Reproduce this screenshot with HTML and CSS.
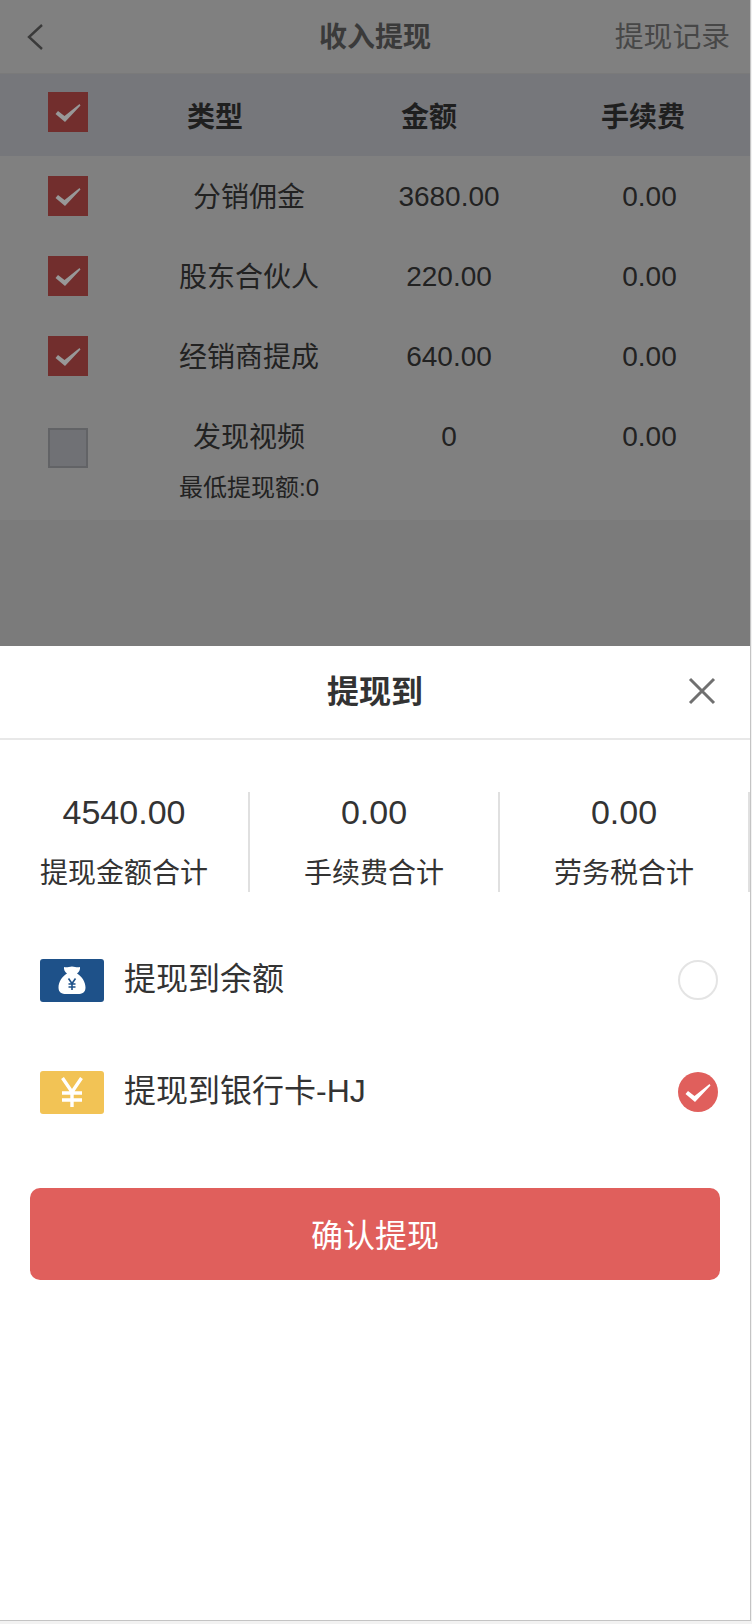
FILE: index.html
```html
<!DOCTYPE html>
<html lang="en">
<head>
    <meta charset="UTF-8">
    <meta name="viewport" content="width=device-width, initial-scale=1.0">
    <title>收入提现</title>
    <link rel="stylesheet" href="styles.css">
</head>
<body>
    <div class="page">
        <div class="backdrop">
            <div class="nav">
                <svg class="nav-back" width="18" height="28" viewBox="0 0 18 28"><path d="M16 2 L3 14 L16 26" fill="none" stroke="#3a3a3a" stroke-width="2.4"/></svg>
                <div class="nav-title">收入提现</div>
                <div class="nav-link">提现记录</div>
            </div>

            <div class="table-head">
                <div class="head-check"><span class="check on"><svg width="26" height="20" viewBox="0 0 26 20"><path d="M0.5 12 L3 9 L9.5 14 L24.5 2 L25.5 3.5 L10 20 Z" fill="#989898"/></svg></span></div>
                <div>类型</div>
                <div>金额</div>
                <div>手续费</div>
            </div>

            <div class="rows">
                <div class="row">
                    <div class="row-check"><span class="check on"><svg width="26" height="20" viewBox="0 0 26 20"><path d="M0.5 12 L3 9 L9.5 14 L24.5 2 L25.5 3.5 L10 20 Z" fill="#989898"/></svg></span></div>
                    <div class="row-name">分销佣金</div>
                    <div>3680.00</div>
                    <div>0.00</div>
                </div>
                <div class="row">
                    <div class="row-check"><span class="check on"><svg width="26" height="20" viewBox="0 0 26 20"><path d="M0.5 12 L3 9 L9.5 14 L24.5 2 L25.5 3.5 L10 20 Z" fill="#989898"/></svg></span></div>
                    <div class="row-name">股东合伙人</div>
                    <div>220.00</div>
                    <div>0.00</div>
                </div>
                <div class="row">
                    <div class="row-check"><span class="check on"><svg width="26" height="20" viewBox="0 0 26 20"><path d="M0.5 12 L3 9 L9.5 14 L24.5 2 L25.5 3.5 L10 20 Z" fill="#989898"/></svg></span></div>
                    <div class="row-name">经销商提成</div>
                    <div>640.00</div>
                    <div>0.00</div>
                </div>
                <div class="row row-last">
                    <div class="row-check"><span class="check"></span></div>
                    <div class="row-name">发现视频<p class="row-note">最低提现额:0</p></div>
                    <div>0</div>
                    <div>0.00</div>
                </div>
            </div>
        </div>

        <div class="sheet">
            <div class="sheet-head">
                <div class="sheet-title">提现到</div>
                <svg class="sheet-close" width="28" height="28" viewBox="0 0 28 28"><path d="M2 2 L26 26 M26 2 L2 26" stroke="#707070" stroke-width="3"/></svg>
            </div>

            <div class="stats">
                <div class="stat">
                    <div class="stat-num">4540.00</div>
                    <div class="stat-label">提现金额合计</div>
                </div>
                <div class="stat">
                    <div class="stat-num">0.00</div>
                    <div class="stat-label">手续费合计</div>
                </div>
                <div class="stat">
                    <div class="stat-num">0.00</div>
                    <div class="stat-label">劳务税合计</div>
                </div>
            </div>

            <div class="option">
                <span class="option-icon blue">
                    <svg width="28" height="28" viewBox="0 0 28 28">
                        <path d="M6 1 C9 2 11 0.5 14 0.5 C17 0.5 19 2 22 1 C22.5 3.5 21 6 19 7.5 C24 10.5 27.5 16 27.5 21.5 C27.5 26.5 24 28 20 28 L8 28 C4 28 0.5 26.5 0.5 21.5 C0.5 16 4 10.5 9 7.5 C7 6 5.5 3.5 6 1 Z" fill="#fff"/>
                        <path d="M10.5 12.5 L14 17.5 L17.5 12.5 M14 17.5 L14 24 M10.5 18 L17.5 18 M10.5 21 L17.5 21" fill="none" stroke="#1e5189" stroke-width="1.6"/>
                    </svg>
                </span>
                <span class="option-text">提现到余额</span>
                <span class="radio"></span>
            </div>
            <div class="option">
                <span class="option-icon yellow">
                    <svg width="22" height="30" viewBox="0 0 22 30">
                        <path d="M1.5 1 L11 15 L20.5 1 M11 15 L11 30 M1 16 L21 16 M1 23 L21 23" fill="none" stroke="#fff" stroke-width="3.4"/>
                    </svg>
                </span>
                <span class="option-text">提现到银行卡-HJ</span>
                <span class="radio on"><svg width="26" height="20" viewBox="0 0 26 20"><path d="M0.5 12 L3 9 L9.5 14 L24.5 2 L25.5 3.5 L10 20 Z" fill="#fff"/></svg></span>
            </div>

            <button class="confirm">确认提现</button>
        </div>
    </div>
</body>
</html>
```

FILE: styles.css
```css
* {
    box-sizing: border-box;
}
body {
    margin: 0;
    background-color: #f2f2f2;
    font-family: "Liberation Sans", "Noto Sans CJK SC", sans-serif;
}
.page {
    width: 751px;
    height: 1621px;
    display: flex;
    flex-direction: column;
    border-right: 1px solid #c4c4c4;
    border-bottom: 1px solid #c4c4c4;
}

/* dimmed page behind the sheet */
.backdrop {
    height: 646px;
    background-color: #7b7b7b;
}
.nav {
    height: 74px;
    display: flex;
    align-items: center;
    justify-content: center;
    position: relative;
    padding-bottom: 4px;
    background-color: #808080;
    border-bottom: 1px solid #7a7a7a;
}
.nav-back {
    position: absolute;
    left: 26px;
    top: 23px;
}
.nav-title {
    font-size: 28px;
    font-weight: bold;
    color: #3a3a3a;
}
.nav-link {
    position: absolute;
    right: 20px;
    top: 14px;
    font-size: 28.8px;
    color: #474747;
}
.table-head {
    height: 82px;
    display: grid;
    grid-template-columns: 108px repeat(3, 214px);
    align-items: center;
    text-align: center;
    background-color: #76777b;
    font-size: 28px;
    font-weight: bold;
    color: #1f1f1f;
}
.head-check {
    padding: 0 0 6px 48px;
    display: flex;
}
.rows {
    height: 364px;
    background-color: #808080;
}
.row {
    height: 80px;
    display: grid;
    grid-template-columns: 149px 200px 200px 201px;
    align-items: start;
    text-align: center;
    font-size: 28px;
    line-height: 82px;
    color: #222;
}
.row-name {
    padding-top: 1px;
}
.row-check {
    padding: 20px 0 0 48px;
    display: flex;
}
.row-last {
    height: 124px;
}
.row-last .row-check {
    padding-top: 32px;
}
.row-note {
    margin: -7px 0 0;
    font-size: 24px;
    line-height: 32px;
}
.check {
    width: 40px;
    height: 40px;
    display: flex;
    align-items: center;
    justify-content: center;
    background-color: #707175;
    border: 2px solid #626366;
}
.check.on {
    background-color: #722e2d;
    border: none;
}

/* bottom sheet */
.sheet {
    flex: 1;
    background-color: #fff;
}
.sheet-head {
    height: 94px;
    display: flex;
    align-items: center;
    justify-content: center;
    position: relative;
    padding-bottom: 6px;
    border-bottom: 2px solid #e8e8e8;
}
.sheet-title {
    font-size: 32px;
    font-weight: bold;
    color: #333;
}
.sheet-close {
    position: absolute;
    right: 34px;
    top: 31px;
}
.stats {
    display: flex;
    margin-top: 52px;
}
.stat {
    width: 250px;
    height: 100px;
    text-align: center;
    border-right: 2px solid #e0e0e0;
}
.stat-num {
    font-size: 34px;
    line-height: 40px;
    color: #333;
}
.stat-label {
    margin-top: 22px;
    font-size: 28px;
    line-height: 40px;
    color: #333;
}
.option {
    height: 112px;
    display: flex;
    align-items: center;
    padding: 0 32px 0 40px;
}
.stats + .option {
    margin-top: 32px;
}
.option-icon {
    width: 64px;
    height: 43px;
    display: flex;
    align-items: center;
    justify-content: center;
    border-radius: 3px;
}
.option-icon.blue {
    background-color: #1e5189;
}
.option-icon.yellow {
    background-color: #f2c355;
}
.option-text {
    flex: 1;
    margin-left: 20px;
    padding-bottom: 8px;
    font-size: 32px;
    color: #333;
}
.radio {
    width: 40px;
    height: 40px;
    display: flex;
    align-items: center;
    justify-content: center;
    border-radius: 50%;
    border: 2px solid #e4e4e4;
}
.radio.on {
    background-color: #e05f5c;
    border: none;
}
.confirm {
    display: block;
    width: 690px;
    height: 92px;
    margin: 40px 0 0 30px;
    padding-bottom: 4px;
    background-color: #e05f5c;
    color: #fff;
    border: none;
    border-radius: 10px;
    font-family: inherit;
    font-size: 32px;
}
```
